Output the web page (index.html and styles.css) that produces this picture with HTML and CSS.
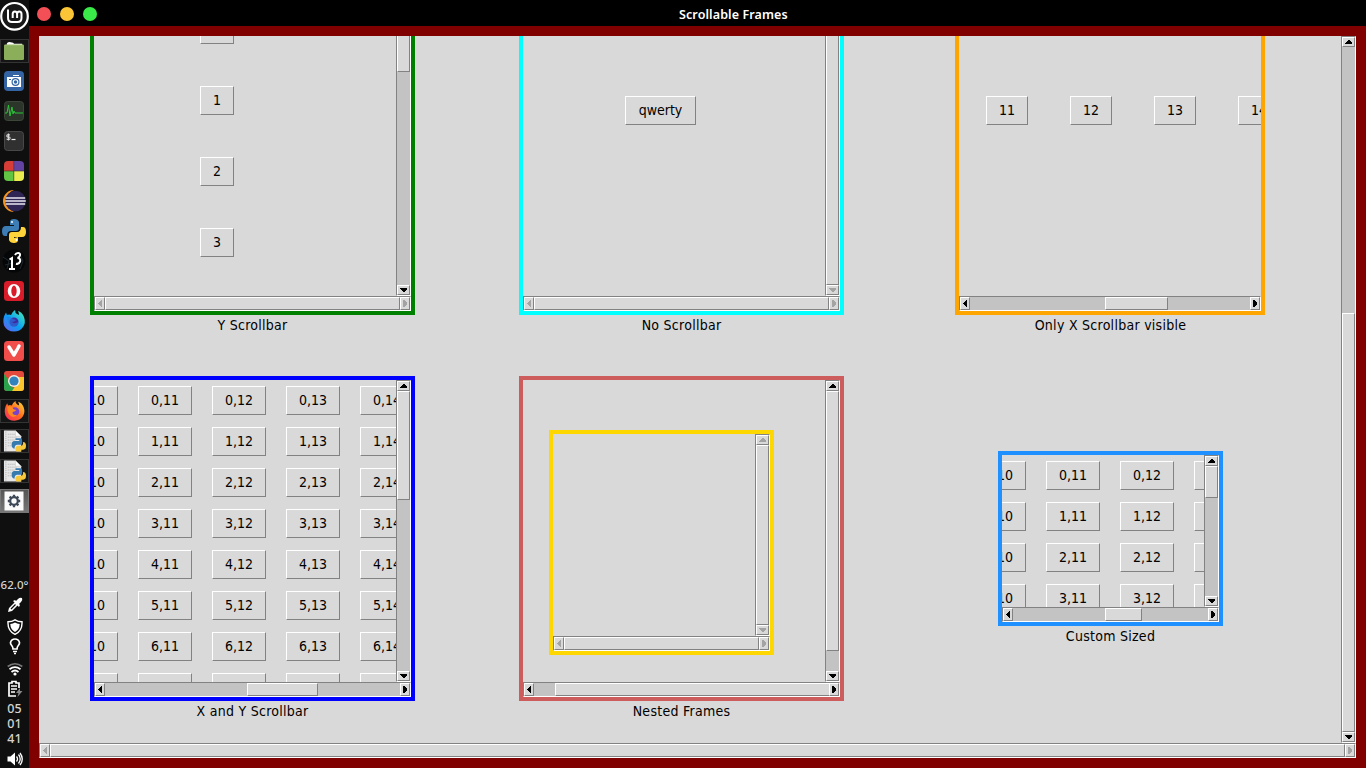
FILE: index.html
```html
<!DOCTYPE html>
<html lang="en">
<head>
<meta charset="utf-8">
<title>Scrollable Frames</title>
<link rel="stylesheet" href="styles.css">
</head>
<body>
<aside class="panel">
  <svg class="logo" viewBox="0 0 29 32"><circle cx="14.5" cy="16.3" r="13.3" fill="#181818" stroke="#fff" stroke-width="2.2"/><path d="M8 9.500v8.500q0 4 4 4h5.500q4 0 4-4v-4q0-2.500-2.200-2.500t-2.200 2.500v4M17.100 14q0-2.500-2.200-2.500t-2.200 2.500v4" fill="none" stroke="#fff" stroke-width="2"/></svg>
  <nav class="tasks">
    <div class="task open"><svg viewBox="0 0 24 22"><path d="M4 10V4q0-3 3-3l4 1 1 1h9v6" fill="#fff"/><rect x="1" y="4" width="22" height="17" rx="1.500" fill="#8bae5a"/><path d="M1.500 4.500h21" stroke="#a2c176"/></svg></div>
    <div class="task"><svg viewBox="0 0 20 20"><rect width="20" height="20" rx="4" fill="#3564a5"/><path d="M3 6h14v10H3zM9 4h6v1H9z" fill="#fff"/><circle cx="11.500" cy="11" r="4" fill="#3564a5"/><circle cx="11.500" cy="11" r="2.800" fill="#fff"/><circle cx="11.500" cy="11" r="1.700" fill="#3564a5"/><path d="M5 8h2v1H5z" fill="#3564a5"/></svg></div>
    <div class="task"><svg viewBox="0 0 20 20"><rect x=".5" y=".5" width="19" height="19" rx="3" fill="#2b3529" stroke="#3c4639"/><path d="M1 12h2l1.500-8 1.500 11 2-9 1 7 1-3 1 2h8" fill="none" stroke="#2bc438" stroke-width="1"/></svg></div>
    <div class="task"><svg viewBox="0 0 20 20"><rect x=".5" y=".5" width="19" height="19" rx="3" fill="#303030" stroke="#484848"/><path d="M6 4Q2.800 3 2.800 4.700T4.500 6 6 7.500 2.600 8M4.400 2.500v7" fill="none" stroke="#ddd" stroke-width="1.100"/><path d="M7.500 8.500h4" stroke="#eee" stroke-width="1.200"/></svg></div>
    <div class="task"><svg viewBox="0 0 20 20"><path d="M10 0v10H0V4q0-4 4-4z" fill="#d63d36"/><path d="M10 0h6q4 0 4 4v6H10z" fill="#6442a2"/><path d="M0 10h10v10H4q-4 0-4-4z" fill="#62c443"/><path d="M10 10h10v6q0 4-4 4h-6z" fill="#ecec50"/><path d="M9.800 0v20M0 10h20" stroke="#333" stroke-width=".6"/></svg></div>
    <div class="task"><svg class="wide" viewBox="0 0 24 22"><path d="M12 0A11 11 0 0 0 12 22 12 12 0 0 1 12 0" fill="#f7941e"/><circle cx="13.500" cy="11" r="10.300" fill="#302656"/><path d="M3.800 8h19.400M3.200 11h20.600M3.800 14h19.400" stroke="#e6e6ee" stroke-width="1.500"/></svg></div>
    <div class="task"><svg class="wide" viewBox="0 0 24 24"><path d="M8 6V3q0-3 4-3t5 3v6q0 3-3 3H9q-4 0-4 5H3q-3 0-3-5t4-5h8V6z" fill="#3c7db5"/><path d="M16 18v3q0 3-4 3t-5-3v-5q0-3 3-3h5q4 0 4-5h2q3 0 3 5t-4 5h-8v1z" fill="#ffd43b"/><circle cx="10" cy="3" r="1" fill="#fff"/><circle cx="14.500" cy="21" r="1" fill="#fff"/></svg></div>
    <div class="task"><svg class="wide" viewBox="0 0 24 24"><circle cx="12" cy="12" r="11.500" fill="#050607"/><path d="M1 8l6 4-2 8M17 4l4 8-3 8M3 16l8-2" fill="none" stroke="#26323b" stroke-width=".8"/><path d="M7.500 10.500l2.500-1.500v11M7 20h6M13 6q1-2 3-2 2.500 0 2 2.300Q17.500 8.500 15.500 9q3.500.5 2.500 3.700-1 2.800-4 2" fill="none" stroke="#fff" stroke-width="2"/></svg></div>
    <div class="task"><svg viewBox="0 0 20 20"><rect width="20" height="20" rx="3.500" fill="#d91c2a"/><path fill-rule="evenodd" d="M10 3a6.300 7 0 1 0 0 14 6.300 7 0 1 0 0-14m0 1.600a2.700 5.400 0 1 1 0 10.800 2.700 5.400 0 1 1 0-10.800" fill="#fff"/></svg></div>
    <div class="task"><svg class="wide" viewBox="0 0 24 24"><defs><linearGradient id="fd" x1="0" y1="1" x2="1" y2="0"><stop offset="0" stop-color="#7755ef"/><stop offset=".45" stop-color="#0b9df2"/><stop offset="1" stop-color="#48f4b4"/></linearGradient></defs><path d="M4 3.500L5 6q2-1 4 0 1-3 4-5 0 3 2 4l2 1q0-2-1-4 4 1 6 6 2 6-1 10-3 4.500-9 4.500-7 0-10-6-2-7 2-13" fill="url(#fd)"/><circle cx="12" cy="13" r="4.500" fill="#3f2aa0"/><path d="M5 8q4-1 6 2l3 1q-1 2-4 2 3 3 7-1-1 6-6 6-5-1-6-10" fill="#277be5" opacity=".6"/></svg></div>
    <div class="task"><svg viewBox="0 0 20 20"><rect width="20" height="20" rx="3.500" fill="#f04d4b"/><path d="M5 6l5 8 5-9" fill="none" stroke="#fff" stroke-width="3.500" stroke-linecap="round" stroke-linejoin="round"/><circle cx="10.500" cy="6" r="2" fill="#f04d4b"/></svg></div>
    <div class="task"><svg viewBox="0 0 20 20"><rect width="20" height="20" rx="3" fill="#e34a3c"/><path d="M0 3l7 9 3 8H3q-3 0-3-3z" fill="#2ba24c"/><path d="M10 6h10v11q0 3-3 3H8l6-9z" fill="#fbc52d"/><circle cx="10" cy="10" r="6" fill="#f4eee4"/><circle cx="10" cy="10" r="4.600" fill="#3182bd"/></svg></div>
    <div class="task open"><svg class="wide" viewBox="0 0 24 24"><defs><linearGradient id="ff" x1="0" y1="1" x2="1" y2="0"><stop offset="0" stop-color="#f7276d"/><stop offset=".5" stop-color="#ff691d"/><stop offset="1" stop-color="#ffe13a"/></linearGradient></defs><path d="M4 3.500L5 6q2-1 4 0 1-3 4-5 0 3 2 4l2 1q0-2-1-4 4 1 6 6 2 6-1 10-3 4.500-9 4.500-7 0-10-6-2-7 2-13" fill="url(#ff)"/><circle cx="12.500" cy="12.500" r="4.700" fill="#7842ca"/><path d="M4 7q5-1 7 3l3 1q-1 2-4 2v2q2 2 5 1-2 3-6 2-5-2-5-11" fill="#ff8a20"/></svg></div>
    <div class="task open"><svg class="wide" viewBox="0 0 24 22"><path d="M1 0h12l6 6v16H1z" fill="#e7e7e7"/><path d="M3 0v22M5 4h8M5 7h10M5 10h8M5 13h6M5 16h5" stroke="#aaa" stroke-dasharray="1 1"/><path d="M13 0v6h6" fill="#fff" stroke="#bbb" stroke-width=".5"/><path d="M13 10V8h5q2 0 2 3v2q0 2-3 2h-2q-3 0-3 4-3 0-3-4t3-4h5v-1z" fill="#367aae"/><path d="M19 20v2h-5q-1-1-1-3 0-3 3-3h3q2 0 2-4 3 0 3 4t-3 4z" fill="#f7c83b"/></svg></div>
    <div class="task open"><svg class="wide" viewBox="0 0 24 22"><path d="M1 0h12l6 6v16H1z" fill="#e7e7e7"/><path d="M3 0v22M5 4h8M5 7h10M5 10h8M5 13h6M5 16h5" stroke="#aaa" stroke-dasharray="1 1"/><path d="M13 0v6h6" fill="#fff" stroke="#bbb" stroke-width=".5"/><path d="M13 10V8h5q2 0 2 3v2q0 2-3 2h-2q-3 0-3 4-3 0-3-4t3-4h5v-1z" fill="#367aae"/><path d="M19 20v2h-5q-1-1-1-3 0-3 3-3h3q2 0 2-4 3 0 3 4t-3 4z" fill="#f7c83b"/></svg></div>
    <div class="task open current"><svg viewBox="0 0 20 20"><path d="M.5.500h19v19H.5z" fill="#fafafa"/><circle cx="10" cy="10" r="3.800" fill="none" stroke="#3c4858" stroke-width="2.200"/><path d="M10 3.800v2M10 14.200v2M3.800 10h2M14.200 10h2M5.600 5.600L7 7M13 13l1.400 1.400M14.400 5.600L13 7M7 13l-1.400 1.400" stroke="#3c4858" stroke-width="2.300"/></svg></div>
  </nav>
  <div class="tray">
    <span class="temp">62.0°</span>
    <svg class="t1" viewBox="0 0 16 16"><path d="M1 15l1-4 6-6 3 3-6 6zM6 4l2-1 1 1 2-2q2-2 4-1 1 2-1 4l-2 2 1 1-1 2z" fill="#fff"/><path d="M4 12l4.500-4.500" stroke="#111" stroke-width="1.300"/></svg>
    <svg class="t2" viewBox="0 0 16 16"><path d="M8 .8q3 2 7 2 .5 9-7 12.500Q.5 11.800 1 2.800q4 0 7-2z" fill="none" stroke="#fff" stroke-width="1.400"/><path d="M8 3.500q2 1.200 4.700 1.500Q12.500 10.500 8 13 3.500 10.500 3.300 5 6 4.700 8 3.500" fill="#fff"/></svg>
    <svg class="t3" viewBox="0 0 16 17"><path d="M6 11q0-2-1.300-3.500Q3.300 6 3.500 4.500 4.500 1 8 1t4.500 3.500q.2 1.500-1.200 3Q10 9 10 11z" fill="none" stroke="#fff" stroke-width="1.700"/><path d="M6 13.500h4M7 15.500h2" stroke="#fff" stroke-width="1.300"/></svg>
    <svg class="t4" viewBox="0 0 16 16"><path d="M.7 5.500Q8 0 15.300 5.500" fill="none" stroke="#777" stroke-width="1.700"/><path d="M2.500 8.200Q8 4 13.500 8.200M4.500 11Q8 8 11.500 11" fill="none" stroke="#fff" stroke-width="1.700"/><circle cx="8" cy="13" r="1.600" fill="#fff"/></svg>
    <svg class="t5" viewBox="0 0 18 18"><path d="M10 16H3V3h3V1.500h4V3h3v5" fill="none" stroke="#fff" stroke-width="1.700"/><path d="M5 6h6M5 9h6M5 12h4" stroke="#fff" stroke-width="1.700"/><path d="M14 8l-4 5h2.500l-1 4 5-6H14z" fill="#888"/></svg>
    <div class="clock"><span>05</span><span>01</span><span>41</span></div>
    <svg class="t6" viewBox="0 0 16 16"><path d="M.5 5.500h3L8 1.500v13L3.500 10.500h-3z" fill="#fff"/><path d="M9.500 5.500q2 2.500 0 5M11.500 3.500q3.500 4.500 0 9M13 2q4.500 6 0 12" fill="none" stroke="#fff" stroke-width="1.300"/></svg>
  </div>
</aside>
<main class="window">
  <header class="titlebar"><i class="dot red"></i><i class="dot amber"></i><i class="dot lime"></i><h1>Scrollable Frames</h1></header>
  <div class="border">
    <div class="scroller" data-y="on 266 419" data-x="off 0 1295">
      <div class="view"><div class="board">
        <section class="cell"><div class="scroller frame green" data-y="on 0 67" data-x="off 0 295"><div class="view"><div class="column"><button>0</button><button>1</button><button>2</button><button>3</button></div></div></div><p>Y Scrollbar</p></section>
        <section class="cell"><div class="scroller frame cyan" data-y="off 0 280" data-x="off 0 295"><div class="view"><div class="single"><button>qwerty</button></div></div></div><p>No Scrollbar</p></section>
        <section class="cell"><div class="scroller frame orange" data-x="on 135 63"><div class="view"><div class="line"><button>11</button><button>12</button><button>13</button><button>14</button></div></div></div><p>Only X Scrollbar visible</p></section>
        <section class="cell"><div class="scroller frame blue" data-y="on 0 109" data-x="on 142 71"><div class="view"><div class="table" data-rows="8" data-cols="5"></div></div></div><p>X and Y Scrollbar</p></section>
        <section class="cell"><div class="scroller frame coral" data-y="on 0 260" data-x="on 21 275"><div class="view"><div class="scroller frame gold" data-y="off 0 180" data-x="off 0 195"><div class="view"></div></div></div></div><p>Nested Frames</p></section>
        <section class="cell"><div class="scroller frame dodger" data-y="on 0 32" data-x="on 92 37"><div class="view"><div class="table" data-rows="4" data-cols="4"></div></div></div><p>Custom Sized</p></section>
      </div></div>
    </div>
  </div>
</main>
<script src="app.js"></script>
</body>
</html>
```
FILE: styles.css
```css
* { box-sizing: border-box; }
body { margin: 0; display: flex; width: 1366px; height: 768px; overflow: hidden; background: #000; font: 14px/16px "DejaVu Sans Condensed", "DejaVu Sans", sans-serif; color: #000; }
svg { display: block; flex: none; }
p, h1 { margin: 0; }

/* desktop panel */
.panel { width: 29px; height: 768px; flex: none; background: #0f0f0f; display: flex; flex-direction: column; overflow: hidden; }
.logo { width: 29px; height: 32px; flex: none; }
.tasks { padding-top: 4px; display: flex; flex-direction: column; flex: none; }
.task { height: 30px; flex: none; display: flex; align-items: center; padding-left: 4px; }
.task svg { width: 20px; height: 20px; }
.task svg.wide { width: 24px; height: 24px; margin-left: -2px; }
.task.open { height: 24px; margin: 3px 0; border: 1px solid #343434; padding-left: 2px; background: #151515; }
.task.open svg { width: 22px; height: 20px; margin: 0; }
.task.open svg.wide { width: 23px; height: 22px; }
.task.open.current { background: linear-gradient(#555, #777); border-color: #777; }
.tray { margin-top: 61px; display: flex; flex-direction: column; align-items: center; color: #d4d4d4; font: 500 12.5px/15px "Noto Sans", sans-serif; }
.tray svg { width: 16px; height: 16px; }
.temp { white-space: nowrap; font-size: 11.5px; }
.tray .t1 { margin-top: 5px; }
.tray .t2 { margin-top: 6px; }
.tray .t3 { margin-top: 3px; height: 17px; }
.tray .t4 { margin-top: 6px; }
.tray .t5 { margin-top: 3px; height: 18px; width: 18px; margin-left: 1px; }
.clock { display: flex; flex-direction: column; margin-top: 3px; }
.tray .t6 { margin-top: 5px; }

/* application window */
.window { flex: 1; height: 768px; display: flex; flex-direction: column; }
.titlebar { height: 26px; flex: none; background: #000; display: flex; align-items: center; gap: 9px; padding: 2px 0 0 8px; }
.dot { width: 14px; height: 14px; border-radius: 50%; }
.red { background: #f25056; }
.amber { background: #fac536; }
.lime { background: #39ea49; }
.titlebar h1 { margin: 2px 0 0 573px; font: 600 12.5px/16px "Noto Sans", sans-serif; letter-spacing: .1px; color: #fff; white-space: nowrap; }
.border { flex: 1; min-height: 0; padding: 10px; background: #800000; display: flex; }

/* scrollable area: view plus optional bars */
.scroller { display: grid; grid-template-columns: minmax(0, 1fr) auto; grid-template-rows: minmax(0, 1fr) auto; background: #d9d9d9; }
.border > .scroller { flex: 1; }
.view { overflow: hidden; min-width: 0; min-height: 0; }
.bar { display: flex; background: #c3c3c3; border: 1px solid; border-color: #828282 #fff #fff #828282; }
.bar.y { width: 15px; flex-direction: column; }
.bar.x { height: 15px; grid-column: 1 / -1; grid-row: 2; }
.arrow, .thumb { flex: none; background: #d9d9d9; border: 1px solid; border-color: #fff #828282 #828282 #fff; }
.arrow { display: flex; align-items: center; justify-content: center; color: #000; }
.off .arrow { color: #a3a3a3; }
.y .arrow { height: 10px; }
.x .arrow { width: 10px; }
.trough { flex: 1; display: flex; min-width: 0; min-height: 0; }
.y .trough { flex-direction: column; }

.board { display: grid; grid-template-columns: repeat(3, 429px); grid-template-rows: 386px 386px; margin: -46px 0 0 -1px; }
.cell { display: flex; flex-direction: column; align-items: center; }
.cell p { margin-top: 2px; line-height: 16px; letter-spacing: .27px; white-space: nowrap; }
.frame { width: 325px; height: 325px; border: 4px solid; }
.green { border-color: #008000; }
.cyan { border-color: #00ffff; }
.orange { border-color: #ffa500; width: 310px; margin-right: 1px; }
.blue { border-color: #0000ff; }
.coral { border-color: #cd5c5c; }
.gold { border-color: #ffd700; width: 225px; height: 225px; margin: 50px 0 0 26px; }
.dodger { border-color: #1e90ff; width: 225px; height: 175px; margin-top: 75px; }

button { height: 29px; padding: 0 0 1px; font: inherit; color: #000; background: #d9d9d9; border: 1px solid; border-color: #fff #828282 #828282 #fff; border-radius: 0; white-space: nowrap; }
.column { display: flex; flex-direction: column; gap: 42px; padding: 21px 0 0 106px; }
.column button { width: 34px; flex: none; }
.single { padding: 102px 0 0 102px; }
.single button { width: 71px; }
.line { display: flex; gap: 42px; padding: 102px 0 0 27px; }
.line button { width: 42px; flex: none; }
.table { display: grid; grid-auto-rows: 29px; gap: 12px 20px; padding-top: 6px; margin-left: -30px; }
```
FILE: app.js
```js
const arrows = {
  up: [7, 4, "3,0 4,0 7,3 7,4 0,4 0,3"],
  down: [7, 4, "0,0 7,0 7,1 4,4 3,4 0,1"],
  left: [4, 7, "0,3 0,4 3,7 4,7 4,0 3,0"],
  right: [4, 7, "4,3 4,4 1,7 0,7 0,0 1,0"]
};

function arrow(dir) {
  const [w, h, points] = arrows[dir];
  return `<span class="arrow"><svg width="${w}" height="${h}" shape-rendering="crispEdges"><polygon points="${points}" fill="currentColor"/></svg></span>`;
}

document.querySelectorAll(".table").forEach(table => {
  const cols = +table.dataset.cols;
  table.style.gridTemplateColumns = `repeat(${cols}, 54px)`;
  for (let r = 0; r < +table.dataset.rows; r++) {
    for (let c = 0; c < cols; c++) {
      const button = document.createElement("button");
      button.textContent = `${r},${10 + c}`;
      table.append(button);
    }
  }
});

document.querySelectorAll(".scroller").forEach(scroller => {
  for (const axis of ["y", "x"]) {
    if (!scroller.dataset[axis]) continue;
    const [state, start, size] = scroller.dataset[axis].split(" ");
    const bar = document.createElement("div");
    bar.className = `bar ${axis} ${state}`;
    const style = axis === "y" ? `margin-top:${start}px;height:${size}px` : `margin-left:${start}px;width:${size}px`;
    const [first, last] = axis === "y" ? ["up", "down"] : ["left", "right"];
    bar.innerHTML = `${arrow(first)}<div class="trough"><div class="thumb" style="${style}"></div></div>${arrow(last)}`;
    scroller.append(bar);
  }
});
```
